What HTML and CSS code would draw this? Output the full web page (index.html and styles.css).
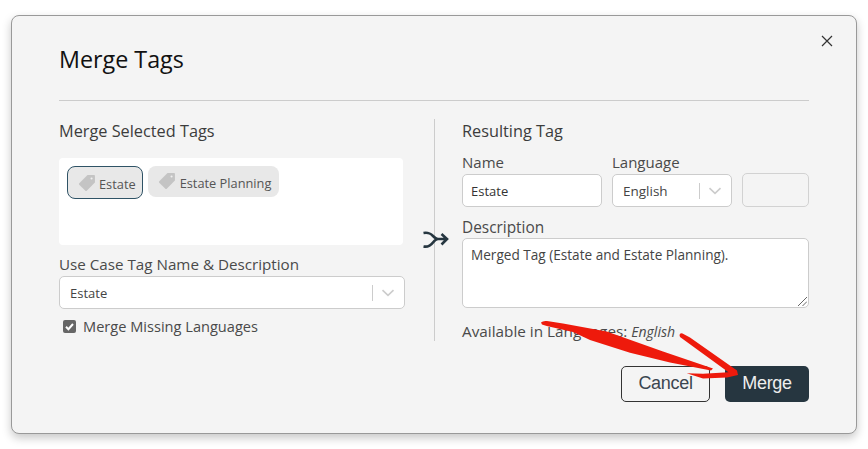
FILE: index.html
```html
<!DOCTYPE html>
<html lang="en">
<head>
<meta charset="utf-8">
<title>Merge Tags</title>
<link rel="stylesheet" href="styles.css">
</head>
<body>
<div class="modal">
  <button class="close" aria-label="Close">
    <svg width="12" height="12" viewBox="0 0 12 12"><path d="M1 1l10 10M11 1L1 11" stroke="#333" stroke-width="1.200" fill="none"/></svg>
  </button>
  <h1 class="title">Merge Tags</h1>
  <div class="rule"></div>
  <div class="columns">
    <section class="left">
      <h2 class="heading">Merge Selected Tags</h2>
      <div class="tagbox">
        <span class="tag tag-active">
          <svg class="tagicon" width="18" height="18" viewBox="0 0 17 17"><path d="M9 1h6.200a.8.8 0 0 1 .8.8v6.200L8.300 15.800a1 1 0 0 1-1.400 0L1.200 10.100a1 1 0 0 1 0-1.400z" fill="#c4c4c4"/><circle cx="12.800" cy="4.200" r="1" fill="#f0f0f0"/></svg>
          Estate
        </span>
        <span class="tag">
          <svg class="tagicon" width="18" height="18" viewBox="0 0 17 17"><path d="M9 1h6.200a.8.8 0 0 1 .8.8v6.200L8.300 15.800a1 1 0 0 1-1.400 0L1.200 10.100a1 1 0 0 1 0-1.400z" fill="#c4c4c4"/><circle cx="12.800" cy="4.200" r="1" fill="#f0f0f0"/></svg>
          Estate Planning
        </span>
      </div>
      <div class="label label-use">Use Case Tag Name &amp; Description</div>
      <div class="select select-wide">
        <span class="select-value">Estate</span>
        <span class="select-sep"></span>
        <svg class="chev" width="14" height="8" viewBox="0 0 14 8"><path d="M1.500 1.200L7 6.400l5.500-5.200" stroke="#ccc" stroke-width="1.600" fill="none"/></svg>
      </div>
      <label class="check">
        <span class="box"><svg width="13" height="13" viewBox="0 0 13 13"><path d="M3 6.800l2.400 2.400L10 4" stroke="#fff" stroke-width="2" fill="none"/></svg></span>
        Merge Missing Languages
      </label>
    </section>
    <div class="divider">
      <svg class="merge-arrow" width="28" height="18" viewBox="0 0 28 18"><path d="M1.500 2C7 1 9 3 11 5s3 3 5 3c-2 0-3.500 1.500-5 3.500S7 16.500 1.500 15.500M15 8h9.500M19.500 3L25 8l-5.500 5.500" stroke="#263640" stroke-width="2.600" fill="none"/></svg>
    </div>
    <section class="right">
      <h2 class="heading">Resulting Tag</h2>
      <div class="row">
        <div class="field field-name">
          <div class="label">Name</div>
          <div class="input input-name">Estate</div>
        </div>
        <div class="field field-lang">
          <div class="label">Language</div>
          <div class="select select-lang">
            <span class="select-value">English</span>
            <span class="select-sep"></span>
            <svg class="chev" width="14" height="8" viewBox="0 0 14 8"><path d="M1.500 1.200L7 6.400l5.500-5.200" stroke="#ccc" stroke-width="1.600" fill="none"/></svg>
          </div>
        </div>
        <div class="blank"></div>
      </div>
      <div class="label label-desc">Description</div>
      <div class="textarea">Merged Tag (Estate and Estate Planning).
        <svg class="grip" width="9" height="9" viewBox="0 0 9 9"><path d="M0 9l9-9M4.500 9L9 4.500" stroke="#666" stroke-width="1" fill="none"/></svg>
      </div>
      <div class="avail">Available in Languages: <em>English</em></div>
    </section>
  </div>
  <div class="actions">
    <button class="btn btn-cancel">Cancel</button>
    <button class="btn btn-merge">Merge</button>
  </div>
  <svg class="annotation" width="868" height="449" viewBox="0 0 868 449"><path d="M541 322.500Q543 320.500 547 321L563 323.500 606.700 331.500 663 351.500 713 368.500 711 370.500 670 362.500 630 352.700 590 340 573 332 546.700 326 542 324.500z" fill="#ee1a0c"/><path d="M679.500 335Q680 332.500 682.500 333.500L690 337.500 737 370.500 738 375 727 377.500 703 378.500 686.700 373.300 703 373.800 728.500 372.300 702 353 680 337z" fill="#ee1a0c"/></svg>
</div>
</body>
</html>
```
FILE: styles.css
```css
* { box-sizing: border-box; }
html, body { margin: 0; padding: 0; background: #fff; }
body { width: 868px; height: 449px; overflow: hidden; font-family: "Open Sans", "Noto Sans", sans-serif; color: #444; padding: 15px 11px 0; }
.modal { width: 846px; height: 419px; background: #f4f4f4; border: 1px solid #999; border-radius: 8px; box-shadow: 0 4px 10px rgba(0,0,0,.22); padding: 0 47px; display: flex; flex-direction: column; }
.close { position: absolute; left: 821px; top: 35px; width: 12px; height: 12px; padding: 0; border: 0; background: none; display: flex; }
.title { margin: 28px 0 0; font-size: 23.300px; line-height: 31px; font-weight: 500; color: #111; }
.rule { height: 1px; background: #ccc; margin-top: 25px; }
.columns { display: flex; margin-top: 18px; }
.left { width: 346px; }
.heading { margin: 0; font-size: 16.300px; line-height: 24px; font-weight: 500; color: #3c3c3c; }
.tagbox { margin-top: 15px; width: 344px; height: 87px; background: #fff; border-radius: 4px; padding: 8px; display: flex; align-items: flex-start; gap: 5px; }
.tag { height: 31px; display: flex; align-items: center; gap: 4px; padding: 2px 8px 0 10px; background: #e8e8e8; border-radius: 8px; font-size: 12.800px; color: #555; }
.tagicon { margin-top: -3px; }
.tag-active { height: 33px; border: 1px solid #2f5366; gap: 3px; padding: 3px 6px 0 10px; }
.label { font-size: 15px; line-height: 20px; color: #4a4a4a; }
.label-use { margin-top: 9px; font-size: 15.200px; }
.select { background: #fff; border: 1px solid #ccc; border-radius: 5px; display: flex; align-items: center; font-size: 13.500px; color: #444; }
.select-wide { width: 346px; height: 33px; margin-top: 2px; padding: 0 9px 0 10px; font-size: 13px; }
.select-value { flex: 1; }
.select-sep { width: 1px; height: 16px; background: #ccc; margin-right: 8px; }
.check { display: flex; align-items: center; gap: 7px; margin: 7px 0 0 4px; font-size: 14.600px; line-height: 20px; color: #4a4a4a; }
.box { width: 13px; height: 13px; background: #666; border-radius: 2px; display: flex; }
.divider { width: 1px; height: 222px; background: #ccc; margin: 0 27px 0 29px; position: relative; flex: none; }
.merge-arrow { position: absolute; left: -12px; top: 112px; }
.right { width: 347px; }
.row { display: flex; margin-top: 9px; }
.field-name { width: 140px; }
.field-lang { width: 120px; margin-left: 10px; }
.input { height: 33px; background: #fff; border: 1px solid #ccc; border-radius: 5px; font-size: 13px; color: #333; padding: 0 8px; display: flex; align-items: center; margin-top: 2px; }
.select-lang { height: 33px; margin-top: 2px; padding: 0 9px 0 10px; }
.blank { width: 67px; height: 34px; margin: 21px 0 0 10px; border: 1px solid #d2d2d2; border-radius: 5px; }
.label-desc { margin-top: 11px; font-size: 15.400px; }
.textarea { position: relative; height: 70px; background: #fff; border: 1px solid #ccc; border-radius: 5px; padding: 6px 8px; font-size: 13.600px; line-height: 19px; color: #444; }
.grip { position: absolute; right: 1px; bottom: 1px; }
.avail { margin-top: 13px; font-size: 15.300px; line-height: 20px; color: #4a4a4a; }
.avail em { font-size: 14px; }
.actions { display: flex; justify-content: flex-end; gap: 15px; margin-top: 24px; }
.btn { height: 36px; border-radius: 5px; font-family: "Liberation Sans", Arial, sans-serif; font-size: 18px; letter-spacing: -.3px; padding: 0 0 2px; }
.btn-cancel { width: 89px; background: #f4f4f4; border: 1px solid #333; color: #3b4650; }
.btn-merge { width: 84px; background: #263640; border: 0; color: #eee; }
.annotation { position: absolute; left: 0; top: 0; pointer-events: none; }
```
